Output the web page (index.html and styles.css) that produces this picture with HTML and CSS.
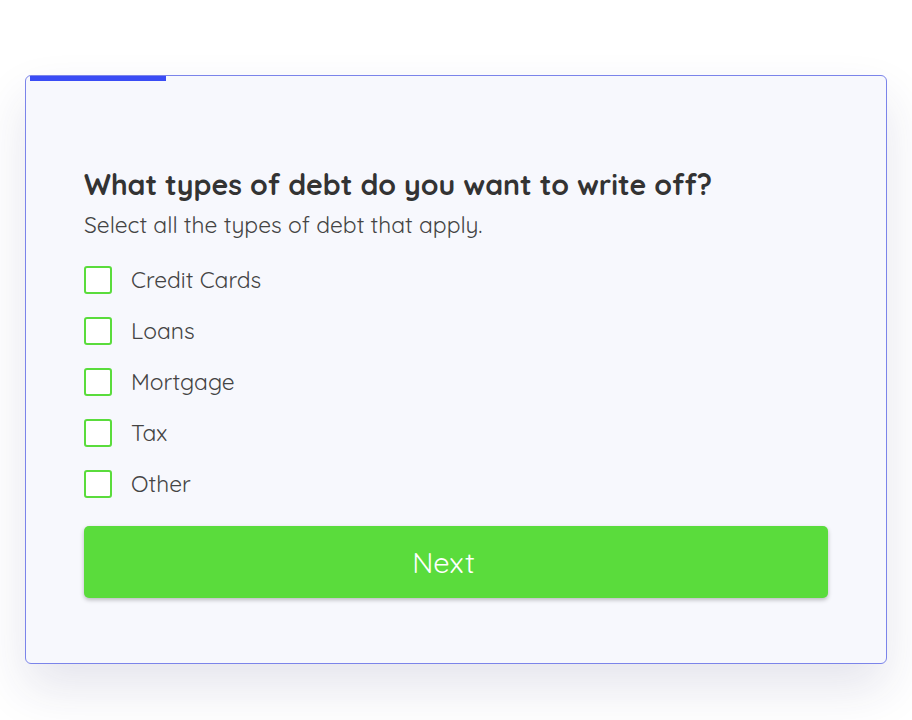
FILE: index.html
```html
<!DOCTYPE html>
<html lang="en">
<head>
    <meta charset="UTF-8">
    <meta name="viewport" content="width=device-width, initial-scale=1.0">
    <title>Debt Quiz</title>
    <link rel="stylesheet" href="styles.css">
</head>
<body>

<div class="card">
    <div class="progress"><div class="progress-fill"></div></div>
    <div class="content">
        <h2 class="question">What types of debt do you want to write off?</h2>
        <p class="hint">Select all the types of debt that apply.</p>
        <ul class="options">
            <li><label><span class="box"></span>Credit Cards</label></li>
            <li><label><span class="box"></span>Loans</label></li>
            <li><label><span class="box"></span>Mortgage</label></li>
            <li><label><span class="box"></span>Tax</label></li>
            <li><label><span class="box"></span>Other</label></li>
        </ul>
        <button class="next">Next</button>
    </div>
</div>

</body>
</html>
```
FILE: styles.css
```css
body {
    font-family: "Quicksand", Lato, "Open Sans", sans-serif;
    background-color: #ffffff;
    color: #333;
    margin: 0;
    padding: 75px 0 60px;
}
.card {
    width: 862px;
    box-sizing: border-box;
    margin: 0 auto;
    border: 1px solid #7b84ea;
    border-radius: 6px;
    background-color: #f7f8fd;
    box-shadow: 0 24px 50px rgba(40, 40, 110, 0.12);
}
.progress {
    height: 5px;
    margin: 0 4px;
}
.progress-fill {
    width: 136px;
    height: 100%;
    background-color: #3a4cf5;
}
.content {
    padding: 87px 58px 65px;
}
.question {
    font-size: 28.5px;
    line-height: 32px;
    font-weight: 700;
    color: #333;
    margin: 0;
}
.hint {
    font-size: 22.8px;
    line-height: 28px;
    color: #444;
    margin: 11px 0 0;
}
.options {
    list-style: none;
    margin: 27px 0 0;
    padding: 0;
    display: flex;
    flex-direction: column;
    gap: 23px;
}
.options label {
    display: flex;
    align-items: center;
    gap: 19px;
    font-size: 22.8px;
    line-height: 28px;
    color: #444;
}
.box {
    width: 28px;
    height: 28px;
    box-sizing: border-box;
    border: 2px solid #5adc3c;
    border-radius: 3px;
    background-color: #fff;
}
.next {
    display: block;
    width: 100%;
    height: 72px;
    margin-top: 28px;
    padding: 0 25px 0 0;
    border: none;
    border-radius: 5px;
    background-color: #5adc3c;
    color: #fff;
    font-family: inherit;
    font-size: 29px;
    box-shadow: 0 2px 4px rgba(0, 0, 0, 0.25);
}
```
